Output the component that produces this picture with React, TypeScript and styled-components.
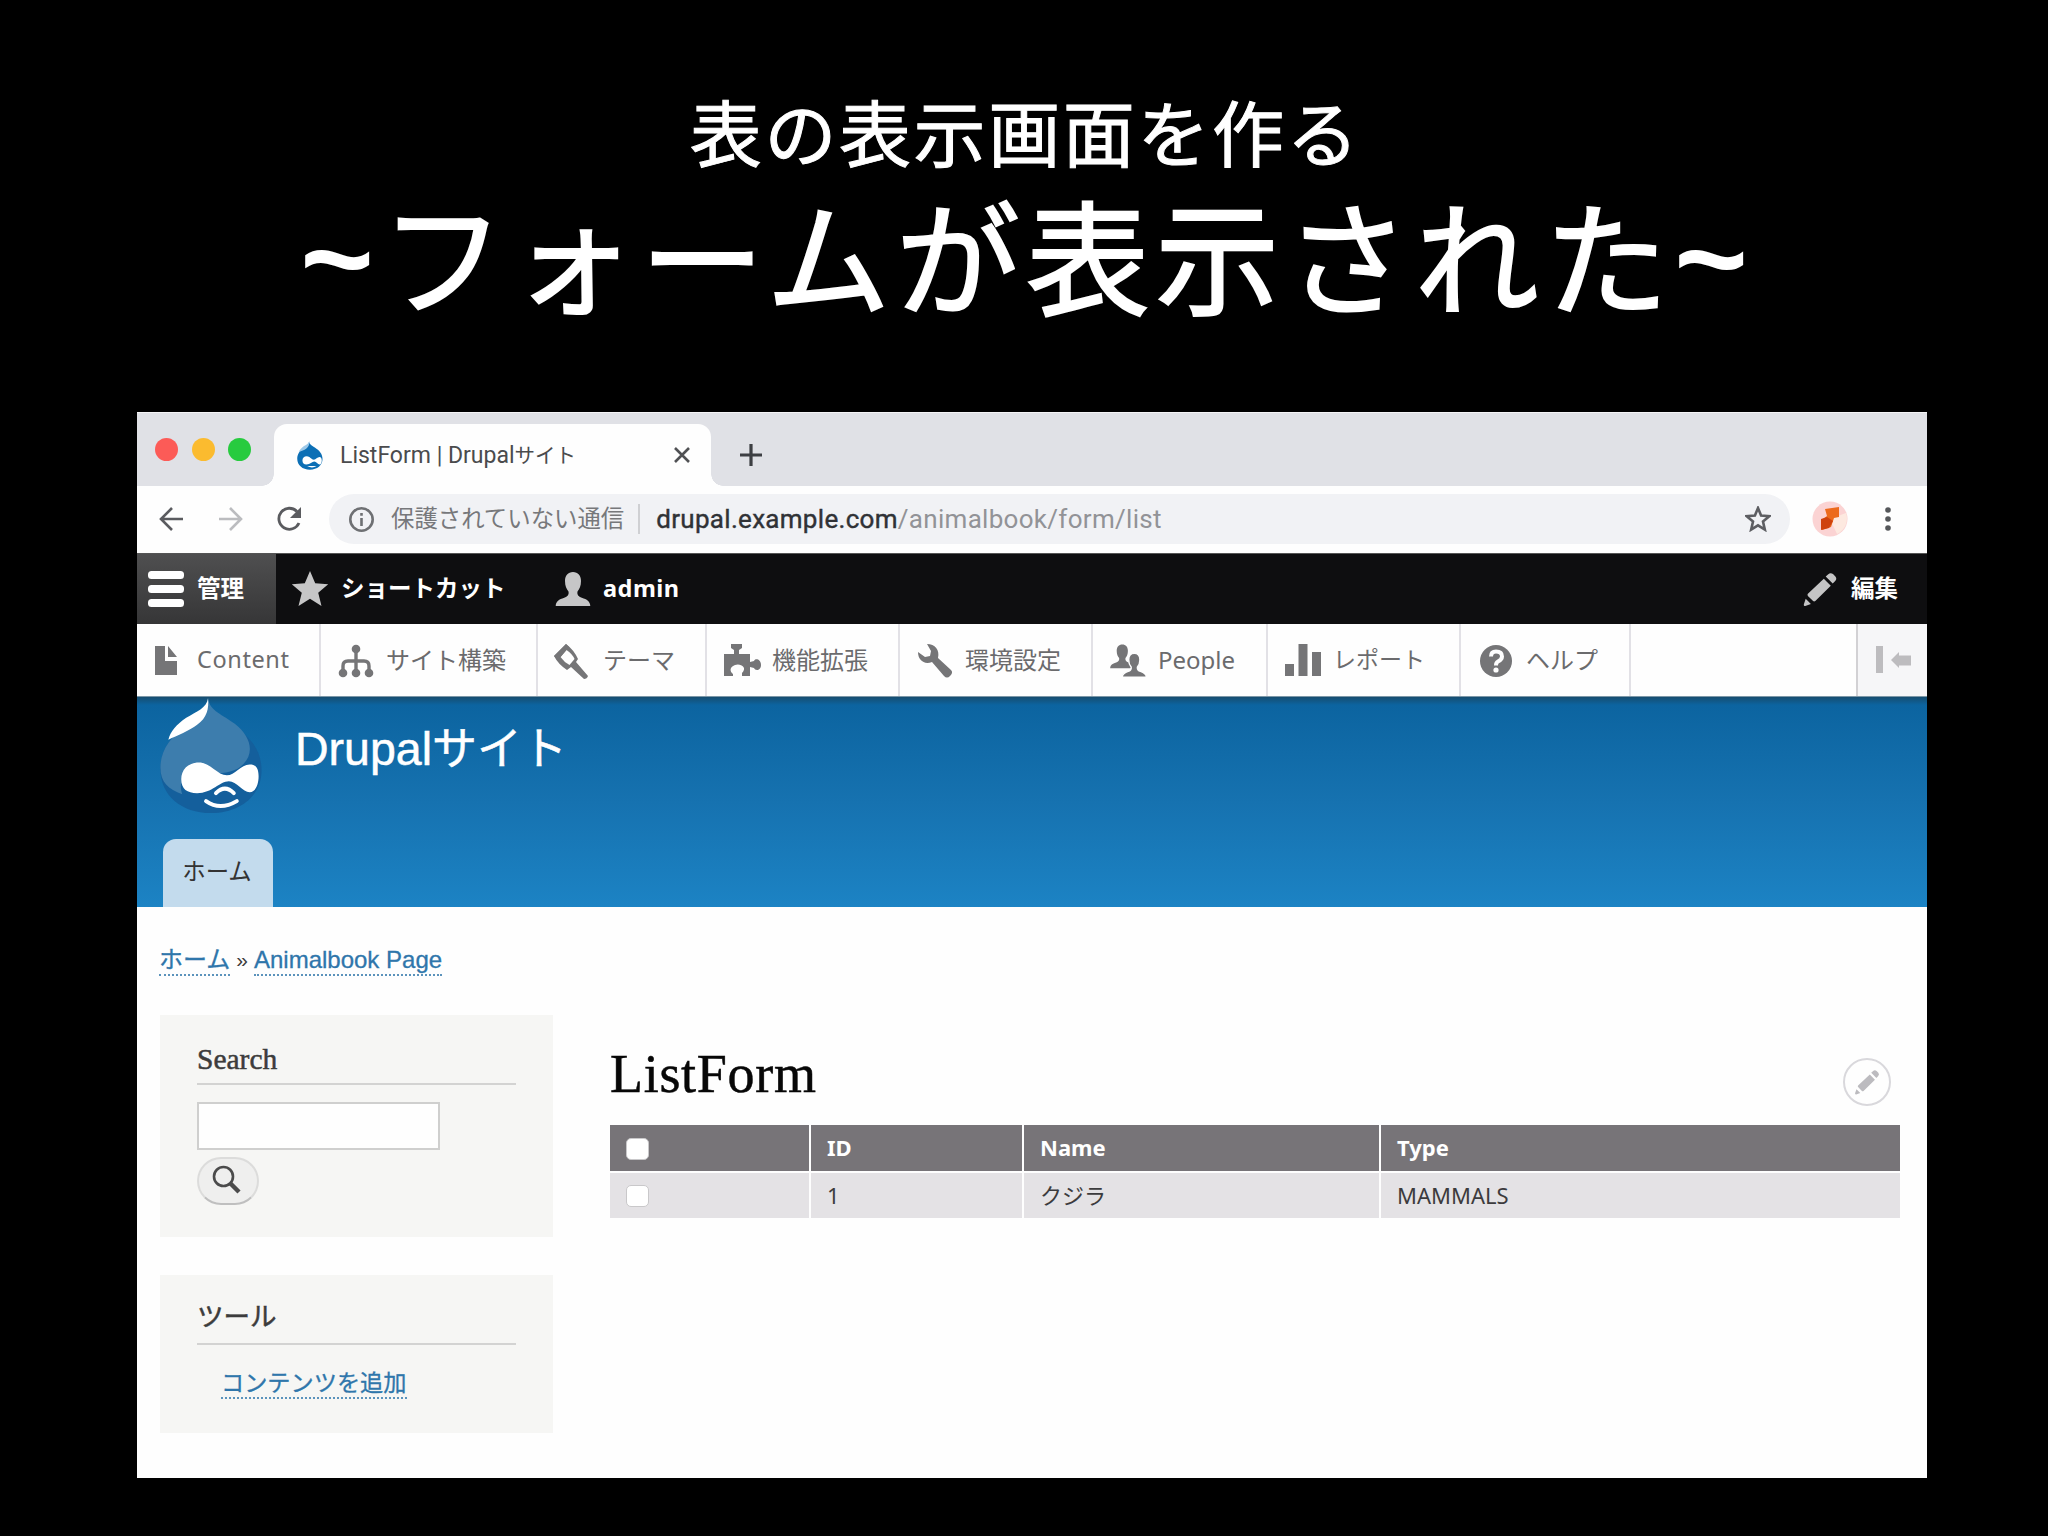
import { ReactNode } from 'react';
import styled, { createGlobalStyle } from 'styled-components';

const GlobalStyle = createGlobalStyle`
  * {
    box-sizing: border-box;
  }

  body {
    margin: 0;
    background: #000;
    overflow: hidden;
  }
`;

const sans = "'Liberation Sans', 'Noto Sans CJK JP', sans-serif";
const chrome = "Roboto, 'Noto Sans CJK JP', sans-serif";
const toolbar = "'Noto Sans', 'Noto Sans CJK JP', sans-serif";
const serif = "'Liberation Serif', 'Noto Sans CJK JP', serif";

const Slide = styled.main`
  width: 2048px;
  height: 1536px;
  display: flex;
  flex-direction: column;
  align-items: center;
  background: #000;
  color: #fff;
`;

const Heading = styled.header`
  height: 412px;
  flex: none;
  padding-top: 78px;
  text-align: center;
  font-family: ${sans};
  white-space: nowrap;
`;

const Subtitle = styled.p`
  margin: 0;
  padding-left: 3px;
  font: 400 72px/104px 'Noto Sans CJK JP', sans-serif;
  letter-spacing: 2.6px;
  -webkit-text-stroke: 1px #fff;
`;

const Title = styled.h1`
  margin: 0;
  display: flex;
  justify-content: center;
  font: 400 124px/140px 'Noto Sans CJK JP', sans-serif;
  letter-spacing: 5.7px;
  -webkit-text-stroke: 2px #fff;
`;

const Tilde = styled.span`
  padding-top: 7px;
  font-family: 'Liberation Sans', sans-serif;
  font-weight: 700;
  font-size: 126px;
  letter-spacing: 0;
  -webkit-text-stroke: 0;

  &:first-child {
    margin-right: 7px;
  }
`;

const Window = styled.section`
  width: 1790px;
  height: 1066px;
  margin-left: 16px;
  flex: none;
  display: flex;
  flex-direction: column;
  background: #fefefe;
  color: #3b3b3b;
  white-space: nowrap;
  overflow: hidden;
`;

const TabStrip = styled.div`
  height: 74px;
  flex: none;
  display: flex;
  align-items: flex-end;
  border-top: 1px solid #f4f4f6;
  background: #e0e1e6;
`;

const Lights = styled.div`
  width: 137px;
  height: 74px;
  padding-left: 18px;
  display: flex;
  align-items: center;
  gap: 13.5px;
`;

const Light = styled.span<{ $color: string }>`
  width: 23px;
  height: 23px;
  border-radius: 50%;
  background: ${({ $color }) => $color};
`;

const BrowserTab = styled.div`
  position: relative;
  width: 437px;
  height: 62px;
  padding: 0 17px 0 23px;
  display: flex;
  align-items: center;
  border-radius: 13px 13px 0 0;
  background: #fefefe;
  font: 400 23px/1 ${chrome};
  color: #4a4b4d;

  &:before,
  &:after {
    content: '';
    position: absolute;
    bottom: 0;
    width: 12px;
    height: 12px;
  }

  &:before {
    left: -12px;
    background: radial-gradient(circle at 0 0, transparent 11.5px, #fefefe 12px);
  }

  &:after {
    right: -12px;
    background: radial-gradient(circle at 100% 0, transparent 11.5px, #fefefe 12px);
  }

  svg:last-child {
    margin-left: auto;
  }
`;

const TabTitle = styled.span`
  margin-left: 17px;
`;

const Kana = styled.span<{ $size: number; $spacing?: number }>`
  font-size: ${({ $size }) => $size}px;
  letter-spacing: ${({ $spacing = 0 }) => $spacing}px;
`;

const NewTab = styled.div`
  height: 62px;
  padding-left: 28px;
  display: flex;
  align-items: center;
`;

const NavBar = styled.div`
  height: 67px;
  flex: none;
  padding: 0 0 1px 20px;
  display: flex;
  align-items: center;
`;

const NavIcons = styled.div`
  width: 172px;
  display: flex;
  gap: 29px;
`;

const Address = styled.div`
  width: 1461px;
  height: 50px;
  padding: 0 19px;
  display: flex;
  align-items: center;
  border-radius: 25px;
  background: #f1f2f5;
  font: 400 26px/1 ${chrome};
  color: #929397;

  svg:last-child {
    margin-left: auto;
  }
`;

const Security = styled.span`
  margin-left: 16px;
  padding-right: 14px;
  font-size: 23.4px;
  line-height: 30px;
  color: #77787b;
  border-right: 2px solid #cfd0d3;
`;

const Url = styled.span`
  margin-left: 16px;
  letter-spacing: .3px;
`;

const Host = styled.span`
  color: #303236;
  -webkit-text-stroke: .4px #303236;
`;

const Avatar = styled.span`
  margin: 0 36px 0 22px;
  display: flex;
`;

const AdminBar = styled.nav`
  height: 71px;
  flex: none;
  display: flex;
  align-items: stretch;
  background: #0e0e10;
  border-top: 1px solid #555;
  color: #fff;
`;

const AdminItem = styled.span<{ $active?: boolean; $width?: number }>`
  width: ${({ $width }) => ($width ? `${$width}px` : 'auto')};
  padding-left: 10px;
  display: flex;
  align-items: center;
  gap: 12px;
  font: 700 23.5px/1 ${toolbar};
  background: ${({ $active }) => ($active ? 'linear-gradient(#4f4f50, #363637)' : 'none')};

  &:nth-child(2) {
    padding-left: 15px;
  }

  &:nth-child(3) {
    gap: 11px;
  }

  &:last-child {
    margin-left: auto;
    padding-right: 29px;
  }
`;

const Tray = styled.nav`
  height: 73px;
  flex: none;
  display: flex;
  background: #fefefe;
  border-bottom: 1px solid #7b97a8;
`;

const TrayItem = styled.span<{ $width: number; $first?: boolean }>`
  width: ${({ $width }) => $width}px;
  padding: 0 0 1px ${({ $first }) => ($first ? 11 : 16)}px;
  display: flex;
  align-items: center;
  gap: 11px;
  border-right: 2px solid #e2e1e6;
  font: 400 24px/1 ${toolbar};
  color: #6b6b6d;
`;

const TrayToggle = styled.span`
  width: 71px;
  margin-left: auto;
  padding-left: 18px;
  display: flex;
  align-items: center;
  background: #f6f6f8;
  border-left: 2px solid #d2d1d4;
`;

const SiteHeader = styled.header`
  height: 210px;
  flex: none;
  padding: 0 23px;
  display: flex;
  flex-direction: column;
  justify-content: space-between;
  background: linear-gradient(#164d70 0, #0c64a0 8px, #1672b0 50%, #1c83c4 100%);
`;

const Branding = styled.div`
  padding-top: 1px;
  display: flex;
  font: 400 46.5px/1 ${sans};
  color: #fff;
  -webkit-text-stroke: .5px #fff;
`;

const SiteName = styled.span`
  padding: 28px 0 0 32px;
`;

const MenuTab = styled.span`
  width: 110px;
  height: 68px;
  margin-left: 3px;
  padding-right: 2px;
  display: flex;
  align-items: center;
  justify-content: center;
  border-radius: 13px 13px 0 0;
  background: #c3dbed;
  font: 400 23.4px/1 ${sans};
  color: #333;
`;

const Breadcrumb = styled.div`
  height: 108px;
  flex: none;
  padding: 38px 0 0 22px;
  display: flex;
  align-items: flex-start;
  gap: 6px;
  font: 400 24px/30px ${sans};
`;

const Link = styled.a`
  height: 31px;
  color: #2f76ab;
  border-bottom: 2px dotted #5b93bc;
  -webkit-text-stroke: .3px #2f76ab;
`;

const Content = styled.div`
  padding: 0 27px 0 23px;
  display: flex;
  gap: 57px;
`;

const Sidebar = styled.aside`
  width: 393px;
  display: flex;
  flex-direction: column;
  gap: 38px;
`;

const Block = styled.section<{ $height: number }>`
  height: ${({ $height }) => $height}px;
  padding: 27px 37px 0 37px;
  background: #f6f6f4;
`;

const BlockTitle = styled.h2`
  margin: 0;
  height: 43px;
  border-bottom: 2px solid #d3d3d2;
  font: 400 29.5px/34px ${serif};
  color: #3c3c3c;
  -webkit-text-stroke: .5px #3c3c3c;
`;

const SearchInput = styled.div`
  width: 243px;
  height: 48px;
  margin: 17px 0 7px;
  background: #fefefe;
  border: 2px solid #cfcfce;
`;

const SearchButton = styled.div`
  width: 62px;
  height: 48px;
  padding: 0 2px 2px 0;
  display: flex;
  align-items: center;
  justify-content: center;
  border: 2px solid #dcdcdb;
  border-bottom-color: #bfbfbf;
  border-radius: 24px;
  background: #efefee;
`;

const ToolTitle = styled.span`
  display: block;
  height: 34px;
  font-size: 26.5px;
  line-height: 31px;
`;

const ToolLinks = styled.div`
  padding: 23px 0 0 24px;
  display: flex;
  font: 400 23.2px/30px ${sans};
`;

const Main = styled.section`
  width: 1290px;
`;

const PageHeading = styled.div`
  height: 110px;
  padding: 43px 9px 0 0;
  display: flex;
  justify-content: space-between;
`;

const PageTitle = styled.h1`
  margin: 0;
  font: 400 54px/32px ${serif};
  letter-spacing: .7px;
  color: #070707;
  -webkit-text-stroke: .5px #070707;
`;

const EditCircle = styled.span`
  width: 48px;
  height: 48px;
  display: flex;
  align-items: center;
  justify-content: center;
  border: 2px solid #d9d8dc;
  border-radius: 50%;
`;

const Table = styled.div`
  display: grid;
  grid-template-columns: 199px 211px 355px 1fr;
  gap: 2px;
`;

const Cell = styled.div<{ $head?: boolean }>`
  height: ${({ $head }) => ($head ? 46 : 45)}px;
  padding: 0 0 2px 16px;
  display: flex;
  align-items: center;
  font: ${({ $head }) => ($head ? 700 : 400)} 22px/1 ${toolbar};
  color: ${({ $head }) => ($head ? '#fff' : '#3c3b3d')};
  background: ${({ $head }) => ($head ? '#777478' : '#e4e2e5')};
`;

const Checkbox = styled.span`
  width: 23px;
  height: 22px;
  margin-top: 3px;
  border: 1px solid #c9c8ca;
  border-radius: 5px;
  background: #fff;
`;

interface IconProps {
  size?: number;
  color?: string;
  children: ReactNode;
}

const IconSvg = styled.svg`
  flex: none;
`;

const Icon = ({ size = 38, color = '#757577', children }: IconProps) => (
  <IconSvg width={size} height={size} viewBox="0 0 38 38" fill={color} stroke="none">
    {children}
  </IconSvg>
);

const Pencil = ({ size = 38, color = '#c4c4c5' }: { size?: number; color?: string }) => (
  <Icon size={size} color={color}>
    <path d="M27 4.500q2.500-2.500 5-.4l2.400 2.400q2 2.400-.4 4.800l-2.300 2.300-7-7zM22.800 8.800l7 7-15.500 15.300q-1.200.9-2.200 0l-5.200-5.200q-.9-1.100 0-2.200zM4.700 28.800l5.200 5.200-5.600 1.900q-1.700.3-1.500-1.500z" />
  </Icon>
);

const person = 'M19 2c5 0 8 3.500 8 9 0 5-1.600 8.200-3.500 10.500-.6 3.300.9 5 4.300 6.200C33 29.500 36 31 36.300 36H1.700C2 31 5 29.500 10.200 27.700c3.400-1.200 4.900-2.900 4.300-6.200C12.600 19.200 11 16 11 11c0-5.500 3-9 8-9z';

const dropShape = 'M48 1c-1 10 9 16 23 25 18 12 31 25 31 47 0 25-21 43-51 43S0 98 0 72c0-21 11-33 25-43C38 20 47 14 48 1z';

const DrupalMark = ({ width, height }: { width: number; height: number }) => (
  <svg width={width} height={height} viewBox="0 0 103 117" stroke="none">
    <path d={dropShape} fill="#145f9c" />
    <path d="M48 1c2 12 15 16 27 25 18 14 20 32 6 43-16 13-50 2-58 13-4 6-2 12-1 15C8 92 0 85 0 70c0-18 11-31 25-41C38 20 47 14 48 1z" fill="#3d7dad" />
    <path d="M48 0c-1 10-12 14-22 20-10 7-16 14-18 22 9-4 21-9 29-15 10-7 12-16 11-27z" fill="#fff" />
    <path d="M39 65c-12 0-18 8-18 17 0 10 6 14 16 14 15 0 23-12 32-12 8 0 14 11 21 11 6 0 9-8 9-16 0-9-3-12-9-12-9 0-15 11-23 11-9 0-17-13-28-13z" fill="#fff" />
    <path d="M56 96q9-9 18 0M46 104q14 10 31 0" fill="none" stroke="#fff" strokeWidth="4" strokeLinecap="round" />
  </svg>
);

const trayItems = [
  {
    label: <Kana $size={23.5} $spacing={.6}>Content</Kana>,
    width: 184,
    icon: <path d="M7 5h10v15h12v14H7zM20 5l9 11h-9z" />,
  },
  {
    label: 'サイト構築',
    width: 217,
    icon: (
      <>
        <circle cx="19" cy="8" r="4.300" />
        <circle cx="6" cy="32" r="4.300" />
        <circle cx="19" cy="32" r="4.300" />
        <circle cx="32" cy="32" r="4.300" />
        <path d="M19 8v24M6 31v-6q0-5 5-5h16q5 0 5 5v6" fill="none" stroke="#757577" strokeWidth="3.400" />
      </>
    ),
  },
  {
    label: 'テーマ',
    width: 169,
    icon: (
      <>
        <path d="M12 3L0 15q4 8 13 14l4-3 13 12q3 0 4-3L22 21l2-3Q20 9 12 3z" />
        <path d="M12.500 9q6 4 8 9l-5 6Q10 21 6.500 16z" fill="#fefefe" />
        <path d="M12 3L0 15l4 4 11-13z" />
      </>
    ),
  },
  {
    label: '機能拡張',
    width: 193,
    icon: <path d="M8 3h11v4l-3 2v4h11v8l4-1c1-3 7-2 7 4s-6 6-7 3l-4-1v9h-8v-3c6-6-2-10-7-8-6 2-5 7-2 9v2H1V13h10V9L8 7z" />,
  },
  {
    label: '環境設定',
    width: 193,
    icon: <path d="M11 3c8 0 13 6 11 14l13 12c2 2 1 4-1 6s-4 2-6 0L16 21C8 24 2 19 2 11l7 5 5-1 1-5z" />,
  },
  {
    label: <Kana $size={24}>People</Kana>,
    width: 175,
    icon: (
      <>
        <path transform="translate(0 2) scale(.7)" d={person} />
        <path transform="translate(12 11) scale(.7)" d={person} stroke="#fefefe" strokeWidth="2" />
      </>
    ),
  },
  {
    label: <Kana $size={23}>レポート</Kana>,
    width: 193,
    icon: <path d="M1 23h9v12H1zM14.500 3h9v32h-9zM28 11h9v24h-9z" />,
  },
  {
    label: 'ヘルプ',
    width: 170,
    icon: (
      <>
        <circle cx="19" cy="20" r="16" />
        <path d="M14 15.500q0-5 5-5 6 0 6 5 0 3-4 5-2 1-2 4" fill="none" stroke="#fefefe" strokeWidth="4" />
        <circle cx="19" cy="29" r="2.600" fill="#fefefe" />
      </>
    ),
  },
];

const starPath = 'M19 1l5.200 12.200 13 1-10 8.600 3.300 13.200L19 28.800 7.500 36l3.300-13.200-10-8.600 13-1z';

const rows = [{ id: 1, name: 'クジラ', type: 'MAMMALS' }];

function BrowserChrome() {
  return (
    <>
      <TabStrip>
        <Lights>
          <Light $color="#fc5b57" />
          <Light $color="#fbbb2f" />
          <Light $color="#27cb3f" />
        </Lights>
        <BrowserTab>
          <svg width="26" height="29" viewBox="0 0 103 117">
            <path d={dropShape} fill="#0c6fb5" />
            <path d="M48 1c-1 10-12 14-22 20-10 7-18 16-20 24 12-5 22-8 30-14 11-8 14-18 12-30z" fill="#9cc8e8" />
            <path d="M39 62c-12 0-18 8-18 17 0 10 6 16 16 16 15 0 23-12 32-12 8 0 14 12 21 12 6 0 9-8 9-16 0-9-3-14-9-14-9 0-15 11-23 11-9 0-17-14-28-14zM40 101q20 12 38 0z" fill="#fff" />
          </svg>
          <TabTitle>
            ListForm | Drupal<Kana $size={20.5}>サイト</Kana>
          </TabTitle>
          <svg width="24" height="24" viewBox="0 0 24 24" stroke="#505154" strokeWidth="2.600">
            <path d="M5 5l14 14M19 5L5 19" />
          </svg>
        </BrowserTab>
        <NewTab>
          <svg width="24" height="24" viewBox="0 0 24 24" stroke="#3d3f43" strokeWidth="3.200">
            <path d="M12 1v22M1 12h22" />
          </svg>
        </NewTab>
      </TabStrip>
      <NavBar>
        <NavIcons>
          <svg width="30" height="30" viewBox="0 0 30 30" fill="none" stroke="#5a5b5f" strokeWidth="2.600">
            <path d="M26 15H4M15 4L4 15l11 11" />
          </svg>
          <svg width="30" height="30" viewBox="0 0 30 30" fill="none" stroke="#bbbcbf" strokeWidth="2.600">
            <path d="M3 15h22M14 4l11 11-11 11" />
          </svg>
          <svg width="30" height="30" viewBox="0 0 30 30" fill="none" stroke="#5a5b5f" strokeWidth="2.800">
            <path d="M24 19A10.500 10.500 0 1 1 22 7.500" />
            <path d="M26 3v11H15z" fill="#5a5b5f" stroke="none" />
          </svg>
        </NavIcons>
        <Address>
          <svg width="27" height="27" viewBox="0 0 27 27" fill="none" stroke="#6e7073" strokeWidth="2.600">
            <circle cx="13.500" cy="13.500" r="11.200" />
            <path d="M13.500 12v8M13.500 7v2.800" />
          </svg>
          <Security>保護されていない通信</Security>
          <Url>
            <Host>drupal.example.com</Host>/animalbook/form/list
          </Url>
          <svg width="26" height="26" viewBox="0 0 38 38" fill="none" stroke="#5d5e62" strokeWidth="3.800">
            <path d="M19 3l4.500 11 12 1-9.200 7.800L29 34.500 19 28.300 9 34.500l2.700-11.700L2.500 15l12-1z" />
          </svg>
        </Address>
        <Avatar>
          <svg width="36" height="36" viewBox="0 0 36 36">
            <circle cx="18" cy="18" r="17.500" fill="#fbd3d3" />
            <path d="M18 18L34 12a17 17 0 0 1-9 21z" fill="#fde9e0" />
            <path d="M13 8l14-2v10l-5 1-3 9-9 3 1-11 4-3z" fill="#ec6a1c" />
            <path d="M9 18l6-2 6 4-4 7-8 2z" fill="#cf420e" />
          </svg>
        </Avatar>
        <svg width="8" height="26" viewBox="0 0 8 26" fill="#55575a">
          <circle cx="4" cy="4" r="2.800" />
          <circle cx="4" cy="13" r="2.800" />
          <circle cx="4" cy="22" r="2.800" />
        </svg>
      </NavBar>
    </>
  );
}

function Toolbar() {
  return (
    <>
      <AdminBar>
        <AdminItem $active $width={139}>
          <Icon color="#fff">
            <rect x="1" y="1" width="36" height="8" rx="3.500" />
            <rect x="1" y="15" width="36" height="8" rx="3.500" />
            <rect x="1" y="29" width="36" height="8" rx="3.500" />
          </Icon>
          管理
        </AdminItem>
        <AdminItem $width={268}>
          <Icon color="#c6c6c7">
            <path d={starPath} />
          </Icon>
          ショートカット
        </AdminItem>
        <AdminItem>
          <Icon color="#c6c6c7">
            <path d={person} />
          </Icon>
          <Kana $size={23.5} $spacing={.5}>admin</Kana>
        </AdminItem>
        <AdminItem>
          <Pencil />
          編集
        </AdminItem>
      </AdminBar>
      <Tray>
        {trayItems.map(({ label, width, icon }, i) => (
          <TrayItem key={i} $width={width} $first={i === 0}>
            <Icon>{icon}</Icon>
            {label}
          </TrayItem>
        ))}
        <TrayToggle>
          <svg width="36" height="28" viewBox="0 0 36 28" fill="#bdbcbf">
            <path d="M0 0h7v27H0zM15 14l8-8v3.500h12v10H23V22z" />
          </svg>
        </TrayToggle>
      </Tray>
    </>
  );
}

export default function App() {
  return (
    <Slide>
      <GlobalStyle />
      <Heading>
        <Subtitle>表の表示画面を作る</Subtitle>
        <Title>
          <Tilde>~</Tilde>フォームが表示された<Tilde>~</Tilde>
        </Title>
      </Heading>
      <Window>
        <BrowserChrome />
        <Toolbar />
        <SiteHeader>
          <Branding>
            <DrupalMark width={103} height={116} />
            <SiteName>
              Drupal<Kana $size={45}>サイト</Kana>
            </SiteName>
          </Branding>
          <MenuTab>ホーム</MenuTab>
        </SiteHeader>
        <Breadcrumb>
          <Link>ホーム</Link>
          <Kana $size={21}>»</Kana>
          <Link>Animalbook Page</Link>
        </Breadcrumb>
        <Content>
          <Sidebar>
            <Block $height={222}>
              <BlockTitle>Search</BlockTitle>
              <SearchInput />
              <SearchButton>
                <svg width="30" height="30" viewBox="0 0 30 30" fill="none" stroke="#4b4b4b">
                  <circle cx="11.500" cy="11.500" r="9.500" strokeWidth="2.600" />
                  <path d="M18 18l9 9" strokeWidth="4.400" />
                </svg>
              </SearchButton>
            </Block>
            <Block $height={158}>
              <BlockTitle>
                <ToolTitle>ツール</ToolTitle>
              </BlockTitle>
              <ToolLinks>
                <Link>コンテンツを追加</Link>
              </ToolLinks>
            </Block>
          </Sidebar>
          <Main>
            <PageHeading>
              <PageTitle>ListForm</PageTitle>
              <EditCircle>
                <Pencil size={28} color="#bcbbbf" />
              </EditCircle>
            </PageHeading>
            <Table>
              <Cell $head>
                <Checkbox />
              </Cell>
              <Cell $head>ID</Cell>
              <Cell $head>Name</Cell>
              <Cell $head>Type</Cell>
              {rows.map(({ id, name, type }) => [
                <Cell key="check">
                  <Checkbox />
                </Cell>,
                <Cell key="id">{id}</Cell>,
                <Cell key="name">{name}</Cell>,
                <Cell key="type">{type}</Cell>,
              ])}
            </Table>
          </Main>
        </Content>
      </Window>
    </Slide>
  );
}
